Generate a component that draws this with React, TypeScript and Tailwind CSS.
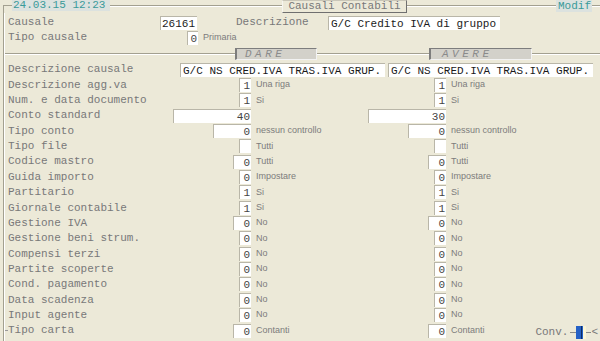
import React from 'react';

type Side = { v: string; w: string; d: string };
type Row = { label: string; dare: Side; avere: Side };

const same = (v: string, w: string, d: string) => ({ dare: { v, w, d }, avere: { v, w, d } });

const rows: Row[] = [
  { label: 'Descrizione agg.va', ...same('1', 'w-[12px]', 'Una riga') },
  { label: 'Num. e data documento', ...same('1', 'w-[12px]', 'Si') },
  { label: 'Conto standard', dare: { v: '40', w: 'w-[78px]', d: '' }, avere: { v: '30', w: 'w-[78px]', d: '' } },
  { label: 'Tipo conto', ...same('0', 'w-[38px]', 'nessun controllo') },
  { label: 'Tipo file', ...same('', 'w-[12px]', 'Tutti') },
  { label: 'Codice mastro', ...same('0', 'w-[18px]', 'Tutti') },
  { label: 'Guida importo', ...same('0', 'w-[12px]', 'Impostare') },
  { label: 'Partitario', ...same('1', 'w-[12px]', 'Si') },
  { label: 'Giornale contabile', ...same('1', 'w-[12px]', 'Si') },
  { label: 'Gestione IVA', ...same('0', 'w-[18px]', 'No') },
  { label: 'Gestione beni strum.', ...same('0', 'w-[12px]', 'No') },
  { label: 'Compensi terzi', ...same('0', 'w-[12px]', 'No') },
  { label: 'Partite scoperte', ...same('0', 'w-[12px]', 'No') },
  { label: 'Cond. pagamento', ...same('0', 'w-[12px]', 'No') },
  { label: 'Data scadenza', ...same('0', 'w-[12px]', 'No') },
  { label: 'Input agente', ...same('0', 'w-[12px]', 'No') },
  { label: 'Tipo carta', ...same('0', 'w-[18px]', 'Contanti') },
];

const line = 'h-[2px] border-t border-[#a3a090] bg-white';
const boxCls = 'h-[14px] bg-white border-t border-l border-[#b9b6a8] leading-[14px] whitespace-pre';
const labelCls = 'text-[#787878]';

function Box({ v, w }: { v: string; w: string }) {
  return <div className={`${boxCls} ${w} text-right pr-[1px] text-[#444]`}>{v}</div>;
}

function Hint({ children }: { children: React.ReactNode }) {
  return (
    <span className="pl-[5px] font-['Liberation_Sans',Arial,sans-serif] text-[9px] text-[#7c7c7c] whitespace-nowrap">
      {children}
    </span>
  );
}

function Conv() {
  return (
    <div className="ml-auto pr-[2px] flex items-center mt-[3px]">
      <span className={labelCls}>Conv.</span>
      <div className="w-[6px] ml-[2px] border-t border-[#8a8a8a]" />
      <div className="w-[10px] h-[13px] flex">
        <div className="w-[7px] bg-[#2561c6] flex justify-end">
          <div className="w-[1px] bg-[#0d2d66] mr-[1px]" />
        </div>
        <div className="w-[3px] bg-[#fbf6d6]" />
      </div>
      <div className="w-[5px] border-t border-[#8a8a8a]" />
      <span className={labelCls}>&lt;</span>
    </div>
  );
}

function FieldRow({ row, last }: { row: Row; last: boolean }) {
  return (
    <div className="flex items-center h-[15.35px]">
      <div className="w-[246px] flex items-center justify-between">
        <span className={`flex items-center whitespace-pre ${labelCls}`}>
          {last ? <span className="w-[3px] border-t border-[#9a9a9a]" /> : <span className="w-[3px]" />}
          {row.label}
        </span>
        <Box v={row.dare.v} w={row.dare.w} />
      </div>
      <div className="w-[195px] flex items-center justify-between">
        <Hint>{row.dare.d}</Hint>
        <Box v={row.avere.v} w={row.avere.w} />
      </div>
      <div className="flex-1 flex items-center">
        <Hint>{row.avere.d}</Hint>
        {last && <Conv />}
      </div>
    </div>
  );
}

export default function App() {
  return (
    <div className="w-[600px] h-[341px] overflow-hidden bg-[#ece9d8] font-['Liberation_Mono','Courier_New',monospace] text-[11px]">
      {/* barra titolo */}
      <div className="flex h-[13px]">
        <div className="ml-[3px] w-[9px] mt-[5px] border-t border-l border-[#a3a090]" />
        <div className="w-[98px] h-[11px] bg-[#dce2df] text-[#3a9a9a] leading-[11px] pl-[1px] whitespace-pre">
          24.03.15 12:23
        </div>
        <div className={`w-[172px] mt-[5px] ${line}`} />
        <div className={`w-[125px] h-[13px] border border-t-[#c9c6b8] border-l-[#f6f5ef] border-r-[#6f6f6f] border-b-[#6f6f6f] text-center leading-[11px] whitespace-pre ${labelCls}`}>
          Causali Contabili
        </div>
        <div className={`w-[149px] mt-[5px] ${line}`} />
        <div className="w-[36px] h-[12px] bg-[#dce2df] text-[#3a9a9a] leading-[12px] pl-[2px]">Modif</div>
        <div className={`flex-1 mt-[5px] ${line}`} />
      </div>

      <div className="ml-[3px] border-l border-[#a3a090] h-[328px]">
        <div className="border-l border-white h-full pt-[2px]">
          {/* testata */}
          <div className="flex items-center h-[15px]">
            <div className={`w-[155px] pl-[3px] ${labelCls}`}>Causale</div>
            <div className={`${boxCls} w-[37px] text-right pr-[2px] text-[#1a1a1a]`}>26161</div>
            <div className="w-[39px]" />
            <div className={`w-[92px] ${labelCls}`}>Descrizione</div>
            <div className={`${boxCls} w-[172px] pl-[2px] text-[#1a1a1a]`}>G/C Credito IVA di gruppo</div>
          </div>
          <div className="flex items-center h-[15px]">
            <div className={`w-[182px] pl-[3px] ${labelCls}`}>Tipo causale</div>
            <Box v="0" w="w-[11px]" />
            <Hint>Primaria</Hint>
          </div>

          {/* separatore DARE / AVERE */}
          <div className="flex items-center h-[17px]">
            <div className={`w-[230px] ${line}`} />
            <div className="w-[82px] h-[12px] bg-[#d3d1ca] border-t border-l-2 border-[#7d7d7d] border-r border-r-[#f2f2f2] border-b border-b-[#f2f2f2] pl-[8px] leading-[10px] italic tracking-[3.5px] text-[#8a8a8a]">
              DARE
            </div>
            <div className={`w-[112px] ${line}`} />
            <div className="w-[103px] h-[12px] bg-[#d3d1ca] border-t border-l-2 border-[#7d7d7d] border-r border-r-[#f2f2f2] border-b border-b-[#f2f2f2] pl-[11px] leading-[10px] italic tracking-[3.5px] text-[#8a8a8a]">
              AVERE
            </div>
            <div className={`flex-1 ${line}`} />
          </div>

          {/* righe */}
          <div className="flex items-center h-[15.35px]">
            <div className={`w-[175px] pl-[3px] ${labelCls}`}>Descrizione causale</div>
            <div className={`${boxCls} w-[205px] pl-[2px] text-[#1a1a1a]`}>G/C NS CRED.IVA TRAS.IVA GRUP.</div>
            <div className={`${boxCls} w-[205px] ml-[3px] pl-[2px] text-[#1a1a1a]`}>G/C NS CRED.IVA TRAS.IVA GRUP.</div>
          </div>
          {rows.map((r, i) => (
            <FieldRow key={r.label} row={r} last={i === rows.length - 1} />
          ))}
        </div>
      </div>
    </div>
  );
}
